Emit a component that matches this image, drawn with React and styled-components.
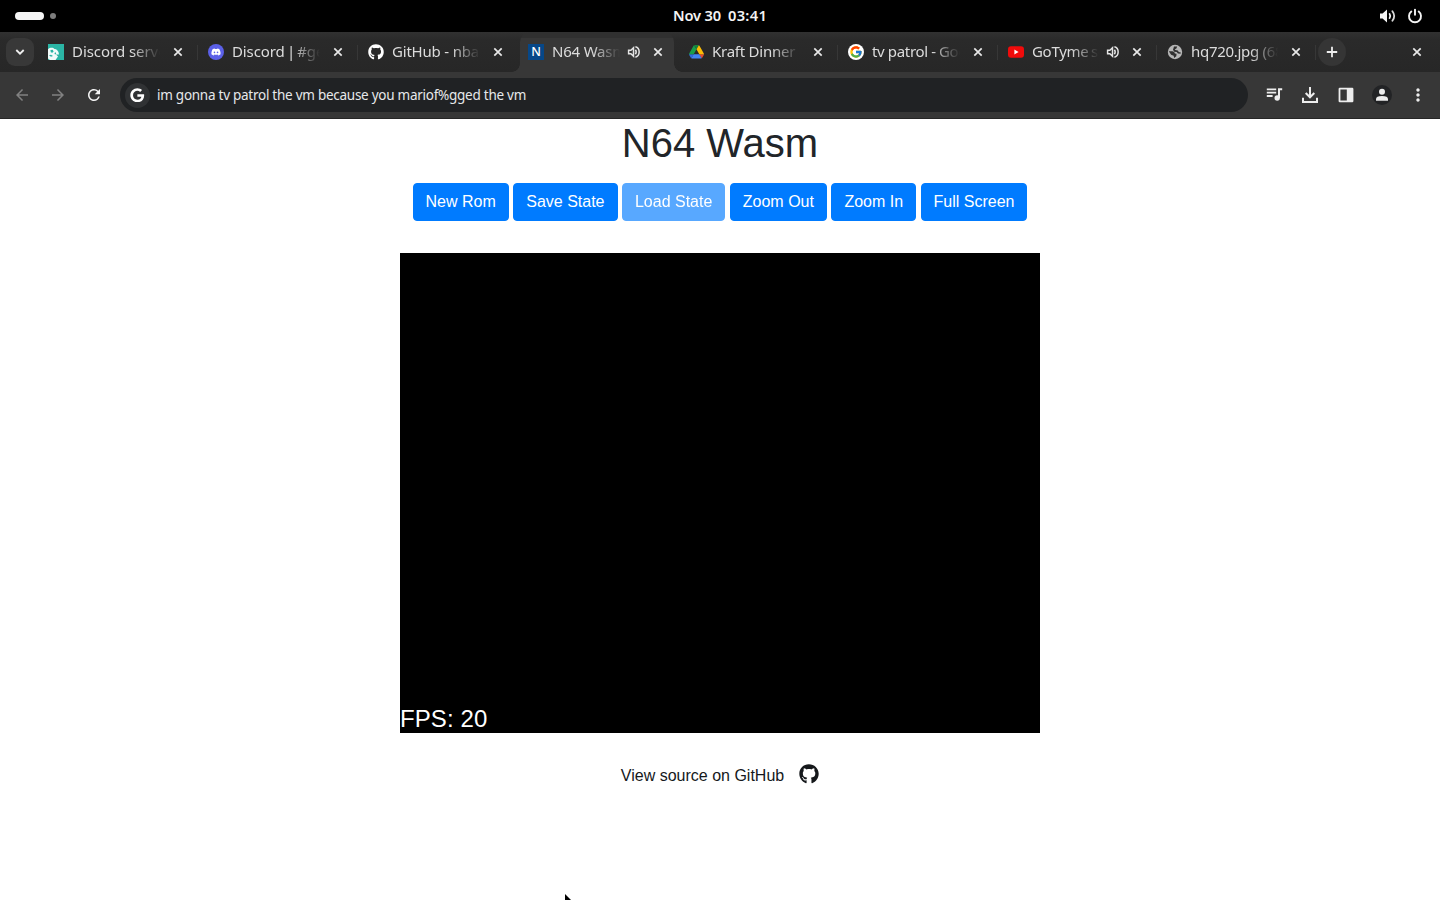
import React from "react";
import styled, { createGlobalStyle, css } from "styled-components";
import { FaDiscord, FaGithub, FaGoogle } from "react-icons/fa";
import { FcGoogle } from "react-icons/fc";
import { MdArrowBack, MdArrowForward, MdRefresh, MdMoreVert } from "react-icons/md";

const GlobalStyle = createGlobalStyle`
  * { box-sizing: border-box; }
  html, body { margin: 0; padding: 0; background: #fff; overflow: hidden; }
  svg { display: block; flex: none; }
`;

const Screen = styled.div`
  position: relative;
  width: 1440px;
  height: 900px;
  display: flex;
  flex-direction: column;
  overflow: hidden;
  font-family: "Noto Sans", sans-serif;
`;

const SystemBar = styled.header`
  height: 32px;
  flex: none;
  display: grid;
  grid-template-columns: 1fr auto 1fr;
  align-items: center;
  padding: 0 17px 0 15px;
  background: #000;
  color: #f4f4f4;
`;

const Workspaces = styled.div`
  display: flex;
  align-items: center;
  gap: 6px;
`;

const WorkspaceDot = styled.span`
  width: ${(p) => (p.$active ? 29 : 6)}px;
  height: ${(p) => (p.$active ? 8 : 6)}px;
  border-radius: 4px;
  background: ${(p) => (p.$active ? "#f6f6f6" : "#7d7d7d")};
`;

const Clock = styled.div`
  display: flex;
  gap: 7px;
  margin-left: 2px;
  font-size: 14.67px;
  line-height: 30px;
  height: 32px;
  font-weight: 600;
`;

const ClockPart = styled.span`
  letter-spacing: ${(p) => p.$spacing}px;
`;

const SystemIcons = styled.div`
  display: flex;
  justify-content: flex-end;
  align-items: center;
  gap: 10px;
`;

const TabStrip = styled.nav`
  height: 40px;
  flex: none;
  display: flex;
  align-items: center;
  padding: 0 15px 0 6px;
  background: linear-gradient(#313131 0, #2a2a2a 8px, #272727 100%);
`;

const StripButton = styled.button`
  width: 28px;
  height: 28px;
  padding: 0;
  border: 0;
  flex: none;
  display: flex;
  align-items: center;
  justify-content: center;
  background: ${(p) => p.$fill || "none"};
  border-radius: ${(p) => (p.$round ? "50%" : "9px")};
  color: #eee;
`;

const TabList = styled.div`
  display: flex;
  margin-left: 6px;
  height: 40px;
`;

const Tab = styled.div`
  position: relative;
  width: ${(p) => p.$width || 160}px;
  height: 40px;
  display: flex;
  align-items: center;
  padding: 0 14px 0 8px;
  color: #dcdcdc;
  ${(p) =>
    p.$active &&
    css`
      width: 154px;
      margin-right: 6px;
      padding-right: 8px;
      background: linear-gradient(#303030 0 6px, #373737 6px);
      border-radius: 10px 10px 0 0;
      &::before,
      &::after {
        content: "";
        position: absolute;
        bottom: 0;
        width: 8px;
        height: 8px;
      }
      &::before {
        left: -8px;
        background: radial-gradient(circle at 0 0, transparent 7.5px, #373737 8px);
      }
      &::after {
        right: -8px;
        background: radial-gradient(circle at 100% 0, transparent 7.5px, #373737 8px);
      }
    `}
  ${(p) =>
    p.$divider &&
    css`
      &::after {
        content: "";
        position: absolute;
        right: 2px;
        top: 13px;
        width: 1px;
        height: 15px;
        background: #373737;
      }
    `}
`;

const TabIcon = styled.span`
  width: 16px;
  height: 16px;
  flex: none;
  display: flex;
  align-items: center;
  justify-content: center;
`;

const TabTitle = styled.span`
  flex: 1;
  min-width: 0;
  height: 24px;
  margin: 0 ${(p) => (p.$beforeAudio ? 8 : 10)}px 0 8px;
  overflow: hidden;
  white-space: nowrap;
  font-size: 15px;
  line-height: 22px;
  letter-spacing: ${(p) => p.$spacing ?? -0.3}px;
  word-spacing: ${(p) => p.$gap || 0}px;
  mask-image: linear-gradient(to left, transparent 0, #000 28px);
`;

const AudioMark = styled.span`
  width: 16px;
  margin: 0 8px 0 -2px;
`;

const CloseMark = styled.span`
  width: 16px;
  height: 16px;
  display: flex;
  align-items: center;
  justify-content: center;
`;

const Spacer = styled.div`
  flex: 1;
`;

const Toolbar = styled.div`
  height: 47px;
  flex: none;
  display: flex;
  align-items: center;
  padding: 0 13px;
  background: #373737;
  border-bottom: 1px solid #262626;
`;

const NavButtons = styled.div`
  display: flex;
  width: 107px;
  gap: 18px;
`;

const NavIcon = styled.span`
  color: ${(p) => (p.$dim ? "#818181" : "#f4f4f4")};
`;

const AddressBar = styled.div`
  flex: 1;
  height: 34px;
  display: flex;
  align-items: center;
  gap: 7px;
  padding-left: 5px;
  border-radius: 17px;
  background: #202224;
  color: #e6e8ea;
  font-size: 13.5px;
  line-height: 20px;
  letter-spacing: -0.26px;
`;

const EngineBadge = styled.span`
  width: 25px;
  height: 25px;
  border-radius: 50%;
  background: #303234;
  display: flex;
  align-items: center;
  justify-content: center;
  color: #fff;
`;

const ToolbarActions = styled.div`
  display: flex;
  align-items: center;
  gap: 16px;
  margin-left: 16px;
  margin-right: -1px;
  color: #ededed;
`;

const ActionIcon = styled.span`
  width: 20px;
  height: 20px;
  display: flex;
  align-items: center;
  justify-content: center;
  border-radius: 50%;
  background: ${(p) => (p.$filled ? "#222325" : "none")};
`;

const Page = styled.main`
  flex: 1;
  display: flex;
  flex-direction: column;
  align-items: center;
  background: #fff;
  color: #212529;
  font-family: "Liberation Sans", Arial, sans-serif;
`;

const Heading = styled.h1`
  margin: 0;
  font-size: 40px;
  font-weight: 400;
  line-height: 48px;
`;

const ButtonRow = styled.div`
  display: flex;
  gap: 4.45px;
  margin-top: 16px;
`;

const PrimaryButton = styled.button`
  height: 38px;
  padding: 6px 12px;
  border: 1px solid #007bff;
  border-radius: 4px;
  background: #007bff;
  color: #fff;
  font: 400 16px/24px "Liberation Sans", Arial, sans-serif;
  opacity: ${(p) => (p.disabled ? 0.65 : 1)};
`;

const GameCanvas = styled.div`
  width: 640px;
  height: 480px;
  margin-top: 32px;
  display: flex;
  align-items: flex-end;
  background: #000;
  color: #fff;
  font-size: 24px;
  line-height: 28px;
  letter-spacing: 0.1px;
`;

const SourceLink = styled.a`
  display: flex;
  align-items: flex-start;
  gap: 15px;
  margin-top: 31px;
  font-size: 16px;
  line-height: 24px;
  color: #15181b;
`;

const Pointer = styled.svg`
  position: absolute;
  left: 564px;
  top: 893px;
`;

const Cross = () => (
  <svg width="10" height="10" viewBox="0 0 10 10" stroke="#e8e8e8" strokeWidth="1.7">
    <path d="M1.3 1.3 8.7 8.7M8.7 1.3 1.3 8.7" />
  </svg>
);

const Speaker = () => (
  <svg width="16" height="16" viewBox="0 0 16 16" fill="none" stroke="#e4e4e4" strokeWidth="1.5">
    <path d="M2.6 6.2h2.3l2.6-2.5v8.6L4.9 9.8H2.6z" />
    <path d="M9.4 5.7q1.6 2.3 0 4.6" />
    <path d="M9.4 2.8c5 1.4 5 9 0 10.4" />
  </svg>
);

const BirdIcon = () => (
  <svg width="16" height="16" viewBox="0 0 16 16">
    <path fill="#2bb5a5" d="M0 0h16v16H0z" />
    <path fill="#f2fbfa" d="M0 5.2C2 3.4 5 3.2 6.5 5c2.2 0 4.2 2 4.5 5.4L8 10.6l2 2L7.5 16H2l-2-1.6z" />
    <path fill="#2bb5a5" d="M2.4 6 4.8 5.7 5.6 7.8 4.2 8.8 2.8 8.2zM1 11.3l2-.6 2 1.3-2 .8zM6.4 9l1.4-.7.4 1.6-1.2.5z" />
  </svg>
);

const DiscordIcon = () => (
  <svg width="16" height="16" viewBox="0 0 16 16">
    <circle cx="8" cy="8" r="8" fill="#5b60e8" />
    <FaDiscord x="3" y="3" size={10} color="#fff" />
  </svg>
);

const LetterIcon = styled.span`
  width: 16px;
  height: 16px;
  flex: none;
  background: #064788;
  color: #fff;
  text-align: center;
  font: 500 12.5px/15px "Noto Sans", sans-serif;
`;

const DriveIcon = () => (
  <svg width="15" height="13.5" viewBox="0 0 87.3 78">
    <path fill="#2f6be4" d="m6.6 66.85 3.85 6.65c.8 1.4 1.95 2.5 3.3 3.3l13.75-23.8H0c0 1.55.4 3.1 1.2 4.5z" />
    <path fill="#199e4b" d="M43.65 25 29.9 1.2c-1.35.8-2.5 1.9-3.3 3.3L1.2 48.5A9 9 0 0 0 0 53h27.5z" />
    <path fill="#e34c35" d="M73.55 76.8c1.35-.8 2.5-1.9 3.3-3.3l1.6-2.75L86.1 57.5c.8-1.4 1.2-2.95 1.2-4.5H59.8l5.85 11.5z" />
    <path fill="#14833c" d="M43.65 25 57.4 1.2C56.05.4 54.5 0 52.9 0H34.4c-1.6 0-3.15.45-4.5 1.2z" />
    <path fill="#4285f4" d="M59.8 53H27.5L13.75 76.8c1.35.8 2.9 1.2 4.5 1.2h50.8c1.6 0 3.15-.45 4.5-1.2z" />
    <path fill="#fbbc05" d="m73.4 26.5-12.7-22c-.8-1.4-1.95-2.5-3.3-3.3L43.65 25l16.15 28h27.45c0-1.55-.4-3.1-1.2-4.5z" />
  </svg>
);

const GoogleIcon = () => (
  <svg width="16" height="16" viewBox="0 0 16 16">
    <circle cx="8" cy="8" r="8" fill="#fff" />
    <FcGoogle x="1.2" y="1.2" size={13.6} />
  </svg>
);

const YoutubeIcon = () => (
  <svg width="16" height="16" viewBox="0 0 16 16">
    <rect y="2.2" width="16" height="11.6" rx="3" fill="#f00b0b" />
    <path fill="#fff" d="m6.4 5.5 4.2 2.5-4.2 2.5z" />
  </svg>
);

const GlobeIcon = () => (
  <svg width="16" height="16" viewBox="0 0 16 16">
    <circle cx="8" cy="8" r="7.2" fill="#b6b6b6" />
    <path fill="#303030" d="M1.8 7.2h3.6q2.4.3 2.5 2.2l1.7.4-.3 2.4-2.2 1.8-.4-2.3-2.6-.9z" />
    <path fill="#303030" d="M7 2.4h3.2l-.8 2-1.6.8.6.9 2.4.3 1 1.6 2 .4-.3 1.4-2.6-.4-1.2-1.4-2.5-.3-1.2-2z" />
  </svg>
);

const MusicListIcon = () => (
  <svg width="18" height="18" viewBox="0 0 18 18" fill="none" stroke="currentColor" strokeWidth="1.8">
    <path d="M1.8 3.4h9.4M1.8 6.7h9.4M1.8 10h5.8" />
    <path d="M14 12V3.3h3.2" strokeWidth="2" />
    <circle cx="12.2" cy="12" r="2.7" fill="currentColor" stroke="none" />
  </svg>
);

const tabs = [
  { title: "Discord server", icon: <BirdIcon />, divider: true, spacing: -0.05 },
  { title: "Discord | #general", icon: <DiscordIcon />, divider: true, spacing: -0.1, gap: -1.6 },
  { title: "GitHub - nbarkhina", icon: <FaGithub size={16} color="#fff" />, spacing: -0.2 },
  { title: "N64 Wasm", icon: <LetterIcon>N</LetterIcon>, active: true, audio: true, spacing: -0.2 },
  { title: "Kraft Dinner Rap", icon: <DriveIcon />, divider: true, spacing: -0.25 },
  { title: "tv patrol - Google", icon: <GoogleIcon />, divider: true, gap: -0.3 },
  { title: "GoTyme song", icon: <YoutubeIcon />, divider: true, audio: true, width: 159, gap: -1 },
  { title: "hq720.jpg (686×386)", icon: <GlobeIcon />, divider: true, width: 159 },
];

const actions = ["New Rom", "Save State", "Load State", "Zoom Out", "Zoom In", "Full Screen"];

export default function App() {
  return (
    <Screen>
      <GlobalStyle />
      <SystemBar>
        <Workspaces>
          <WorkspaceDot $active />
          <WorkspaceDot />
        </Workspaces>
        <Clock>
          <ClockPart $spacing={-0.15}>Nov 30</ClockPart>
          <ClockPart $spacing={0.3}>03:41</ClockPart>
        </Clock>
        <SystemIcons>
          <svg width="18" height="16" viewBox="0 0 18 16" fill="none" stroke="#f4f4f4" strokeWidth="1.8" strokeLinecap="round">
            <path fill="#f4f4f4" stroke="none" d="M1 5.4h2.6L8 1.4v13.2l-4.4-4H1z" />
            <path d="M10.6 5.9q1.3 2.1 0 4.2" />
            <path d="M13.4 3.2q3.6 4.8 0 9.6" stroke="#d8d8d8" />
          </svg>
          <svg width="16" height="16" viewBox="0 0 16 16" fill="none" stroke="#f4f4f4" strokeWidth="1.9" strokeLinecap="round">
            <path d="M4.3 3.5a6 6 0 1 0 7.4 0M8 1.6v5.2" />
          </svg>
        </SystemIcons>
      </SystemBar>

      <TabStrip>
        <StripButton $fill="#383838" aria-label="Search tabs">
          <svg width="10" height="8" viewBox="0 0 10 8" fill="none" stroke="#f0f0f0" strokeWidth="1.8">
            <path d="m1.3 2 3.7 3.7L8.7 2" />
          </svg>
        </StripButton>
        <TabList>
          {tabs.map((tab) => (
            <Tab key={tab.title} $active={tab.active} $divider={tab.divider} $width={tab.width}>
              <TabIcon>{tab.icon}</TabIcon>
              <TabTitle $spacing={tab.spacing} $gap={tab.gap} $beforeAudio={tab.audio}>
                {tab.title}
              </TabTitle>
              {tab.audio && (
                <AudioMark>
                  <Speaker />
                </AudioMark>
              )}
              <CloseMark>
                <Cross />
              </CloseMark>
            </Tab>
          ))}
        </TabList>
        <StripButton $fill="#353535" $round aria-label="New tab">
          <svg width="12" height="12" viewBox="0 0 12 12" stroke="#eee" strokeWidth="1.8">
            <path d="M6 .8v10.4M.8 6h10.4" />
          </svg>
        </StripButton>
        <Spacer />
        <CloseMark>
          <Cross />
        </CloseMark>
      </TabStrip>

      <Toolbar>
        <NavButtons>
          <NavIcon $dim><MdArrowBack size={18} /></NavIcon>
          <NavIcon $dim><MdArrowForward size={18} /></NavIcon>
          <NavIcon><MdRefresh size={18} /></NavIcon>
        </NavButtons>
        <AddressBar>
          <EngineBadge><FaGoogle size={14.5} /></EngineBadge>
          <span>im gonna tv patrol the vm because you mariof%gged the vm</span>
        </AddressBar>
        <ToolbarActions>
          <ActionIcon><MusicListIcon /></ActionIcon>
          <ActionIcon>
            <svg width="18" height="18" viewBox="0 0 18 18" fill="none" stroke="currentColor" strokeWidth="2">
              <path d="M9 1v10M4.7 7 9 11.3 13.3 7M2 11.8V16h14v-4.2" />
            </svg>
          </ActionIcon>
          <ActionIcon>
            <svg width="16" height="16" viewBox="0 0 16 16">
              <path fill="currentColor" fillRule="evenodd" d="M1.8.8h12.4q1.2 0 1.2 1.2v12q0 1.2-1.2 1.2H1.8Q.6 15.2.6 14V2Q.6.8 1.8.8zM2.4 2.5v11h6.4v-11z" />
            </svg>
          </ActionIcon>
          <ActionIcon $filled>
            <svg width="14" height="14" viewBox="0 0 14 14" fill="currentColor">
              <circle cx="7" cy="3.8" r="3" />
              <path d="M1 12.8v-1.6q0-3.2 6-3.2t6 3.2v1.6z" />
            </svg>
          </ActionIcon>
          <ActionIcon><MdMoreVert size={20} /></ActionIcon>
        </ToolbarActions>
      </Toolbar>

      <Page>
        <Heading>N64 Wasm</Heading>
        <ButtonRow>
          {actions.map((name) => (
            <PrimaryButton key={name} disabled={name === "Load State"}>{name}</PrimaryButton>
          ))}
        </ButtonRow>
        <GameCanvas>FPS: 20</GameCanvas>
        <SourceLink>
          View source on GitHub
          <FaGithub size={20} />
        </SourceLink>
      </Page>
      <Pointer width="10" height="7" viewBox="0 0 10 7">
        <path d="M1 1v6h6z" fill="#000" />
      </Pointer>
    </Screen>
  );
}
